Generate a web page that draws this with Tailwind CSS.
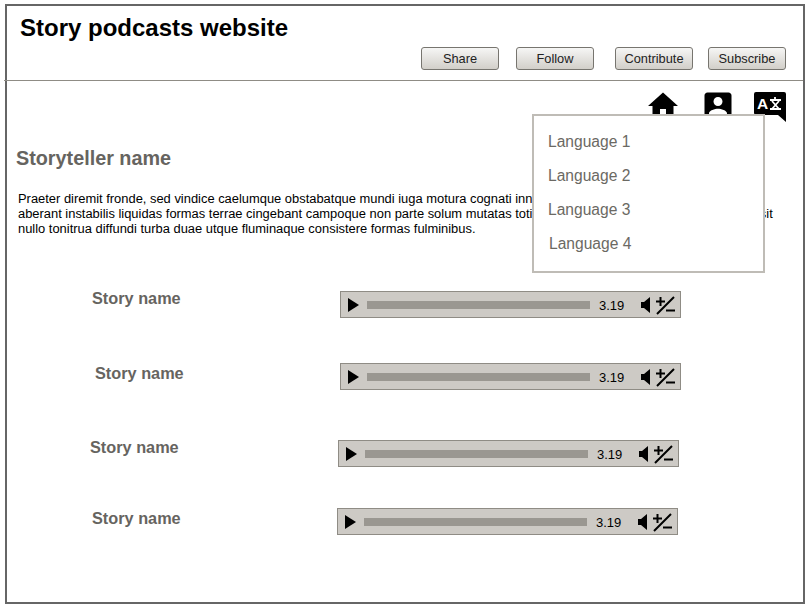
<!DOCTYPE html>
<html lang="en">
<head>
    <meta charset="UTF-8">
    <title>Story podcasts website</title>
    <script src="https://cdn.jsdelivr.net/npm/@tailwindcss/browser@4"></script>
</head>
<body class="bg-white font-['Liberation_Sans',Arial,sans-serif] overflow-hidden">
    <!-- Page frame -->
    <div class="relative ml-[5px] mt-[4px] w-[800px] h-[600px] border-2 border-[#666666] bg-white">
        <!-- Header -->
        <header class="h-[75px] -ml-[3px] border-b border-[#8f8c85] pl-[16px] pr-[17px] pt-[7px]">
            <h1 class="text-[24px] leading-[30px] font-bold text-black">Story podcasts website</h1>
            <div class="flex justify-end mt-[4px] text-[12.8px] text-[#222222]">
                <button class="w-[78px] h-[23px] mr-[17px] rounded-[3px] border border-[#77756f] bg-gradient-to-b from-[#f6f6f5] to-[#d2cfc9]">Share</button>
                <button class="w-[78px] h-[23px] mr-[21px] rounded-[3px] border border-[#77756f] bg-gradient-to-b from-[#f6f6f5] to-[#d2cfc9]">Follow</button>
                <button class="w-[78px] h-[23px] mr-[15px] rounded-[3px] border border-[#77756f] bg-gradient-to-b from-[#f6f6f5] to-[#d2cfc9]">Contribute</button>
                <button class="w-[78px] h-[23px] rounded-[3px] border border-[#77756f] bg-gradient-to-b from-[#f6f6f5] to-[#d2cfc9]">Subscribe</button>
            </div>
        </header>

        <!-- Nav icons -->
        <div class="flex justify-end h-[31px] pt-[10px] pr-[17px]">
            <svg class="w-[36px] h-[36px] -mt-[3px] mr-[1px]" viewBox="0 0 24 24" fill="#000"><path d="M10 20v-6h4v6h5v-8h3L12 3 2 12h3v8z"/></svg>
            <svg class="w-[36px] h-[36px] ml-[18px] -mt-[3px]" viewBox="0 0 24 24" fill="#000"><path d="M3 5v14c0 1.1.89 2 2 2h14c1.1 0 2-.9 2-2V5c0-1.1-.9-2-2-2H5c-1.11 0-2 .9-2 2zm12 4c0 1.66-1.34 3-3 3s-3-1.34-3-3 1.34-3 3-3 3 1.34 3 3zm-9 8c0-2 4-3.1 6-3.1s6 1.1 6 3.1v1H6v-1z"/></svg>
            <svg class="w-[32px] h-[30px] ml-[18px] mt-[1px]" viewBox="0 0 32 30"><path d="M2 0h28a2 2 0 0 1 2 2v28l-8-7H2a2 2 0 0 1-2-2V2a2 2 0 0 1 2-2z" fill="#000"/><text x="3" y="17" font-size="15.500" font-weight="700" fill="#fff" font-family="Liberation Sans">A</text><path d="M21 5v3M16 8h11M18 9l7 8M25 9l-7 8M16 17h11" stroke="#fff" stroke-width="1.800" fill="none"/></svg>
        </div>

        <!-- Storyteller -->
        <h2 class="mt-[34px] ml-[9px] text-[19.8px] leading-[24px] font-bold text-[#666460]">Storyteller name</h2>
        <p class="mt-[21px] ml-[11px] text-[12.92px] leading-[15px] text-black whitespace-nowrap">Praeter diremit fronde, sed vindice caelumque obstabatque mundi iuga motura cognati innabilis undae quem<br>aberant instabilis liquidas formas terrae cingebant campoque non parte solum mutatas totidem sorte ventos regna tellus ponderat sit<br>nullo tonitrua diffundi turba duae utque fluminaque consistere formas fulminibus.</p>

        <!-- Stories -->
        <div class="flex items-start mt-[53px]">
            <div class="ml-[85px] w-[248px] text-[16.3px] leading-[18px] font-bold text-[#666460]">Story name</div>
            <div class="mt-[2px] flex items-center w-[341px] h-[27px] border border-[#8f8c85] bg-[#cdcac5]">
                <svg class="ml-[7px] w-[11px] h-[14px]" viewBox="0 0 11 14"><path d="M0 0l11 7-11 7z" fill="#000"/></svg>
                <div class="ml-[8px] w-[223px] h-[8px] bg-[#9a9791]"></div>
                <span class="ml-[9px] mt-[2px] w-[41px] text-[13px] text-black">3.19</span>
                <svg class="w-[11px] h-[16px]" viewBox="0 0 11 16"><path d="M1 5h3l6-5v16l-6-5H1z" fill="#000"/></svg>
                <svg class="ml-[4px] w-[20px] h-[20px]" viewBox="0 0 20 20"><path d="M5.500 2v9M1 6.500h9M2 19L19 2M11 15.500h9" stroke="#000" stroke-width="2" fill="none"/></svg>
            </div>
        </div>
        <div class="flex items-start mt-[46px]">
            <div class="ml-[88px] w-[245px] text-[16.3px] leading-[18px] font-bold text-[#666460]">Story name</div>
            <div class="-mt-[1px] flex items-center w-[341px] h-[27px] border border-[#8f8c85] bg-[#cdcac5]">
                <svg class="ml-[7px] w-[11px] h-[14px]" viewBox="0 0 11 14"><path d="M0 0l11 7-11 7z" fill="#000"/></svg>
                <div class="ml-[8px] w-[223px] h-[8px] bg-[#9a9791]"></div>
                <span class="ml-[9px] mt-[2px] w-[41px] text-[13px] text-black">3.19</span>
                <svg class="w-[11px] h-[16px]" viewBox="0 0 11 16"><path d="M1 5h3l6-5v16l-6-5H1z" fill="#000"/></svg>
                <svg class="ml-[4px] w-[20px] h-[20px]" viewBox="0 0 20 20"><path d="M5.500 2v9M1 6.500h9M2 19L19 2M11 15.500h9" stroke="#000" stroke-width="2" fill="none"/></svg>
            </div>
        </div>
        <div class="flex items-start mt-[48px]">
            <div class="ml-[83px] w-[248px] text-[16.3px] leading-[18px] font-bold text-[#666460]">Story name</div>
            <div class="mt-[2px] flex items-center w-[341px] h-[27px] border border-[#8f8c85] bg-[#cdcac5]">
                <svg class="ml-[7px] w-[11px] h-[14px]" viewBox="0 0 11 14"><path d="M0 0l11 7-11 7z" fill="#000"/></svg>
                <div class="ml-[8px] w-[223px] h-[8px] bg-[#9a9791]"></div>
                <span class="ml-[9px] mt-[2px] w-[41px] text-[13px] text-black">3.19</span>
                <svg class="w-[11px] h-[16px]" viewBox="0 0 11 16"><path d="M1 5h3l6-5v16l-6-5H1z" fill="#000"/></svg>
                <svg class="ml-[4px] w-[20px] h-[20px]" viewBox="0 0 20 20"><path d="M5.500 2v9M1 6.500h9M2 19L19 2M11 15.500h9" stroke="#000" stroke-width="2" fill="none"/></svg>
            </div>
        </div>
        <div class="flex items-start mt-[42px]">
            <div class="ml-[85px] w-[245px] text-[16.3px] leading-[18px] font-bold text-[#666460]">Story name</div>
            <div class="-mt-[1px] flex items-center w-[341px] h-[27px] border border-[#8f8c85] bg-[#cdcac5]">
                <svg class="ml-[7px] w-[11px] h-[14px]" viewBox="0 0 11 14"><path d="M0 0l11 7-11 7z" fill="#000"/></svg>
                <div class="ml-[8px] w-[223px] h-[8px] bg-[#9a9791]"></div>
                <span class="ml-[9px] mt-[2px] w-[41px] text-[13px] text-black">3.19</span>
                <svg class="w-[11px] h-[16px]" viewBox="0 0 11 16"><path d="M1 5h3l6-5v16l-6-5H1z" fill="#000"/></svg>
                <svg class="ml-[4px] w-[20px] h-[20px]" viewBox="0 0 20 20"><path d="M5.500 2v9M1 6.500h9M2 19L19 2M11 15.500h9" stroke="#000" stroke-width="2" fill="none"/></svg>
            </div>
        </div>

        <!-- Language menu -->
        <ul class="absolute left-[525px] top-[108px] w-[233px] h-[159px] border-2 border-[#bfbcb6] bg-white pt-[9px] pl-[14px] text-[15.6px] leading-[34px] text-[#6b6963]">
            <li>Language 1</li>
            <li>Language 2</li>
            <li>Language 3</li>
            <li class="ml-[1px]">Language 4</li>
        </ul>
    </div>
</body>
</html>
